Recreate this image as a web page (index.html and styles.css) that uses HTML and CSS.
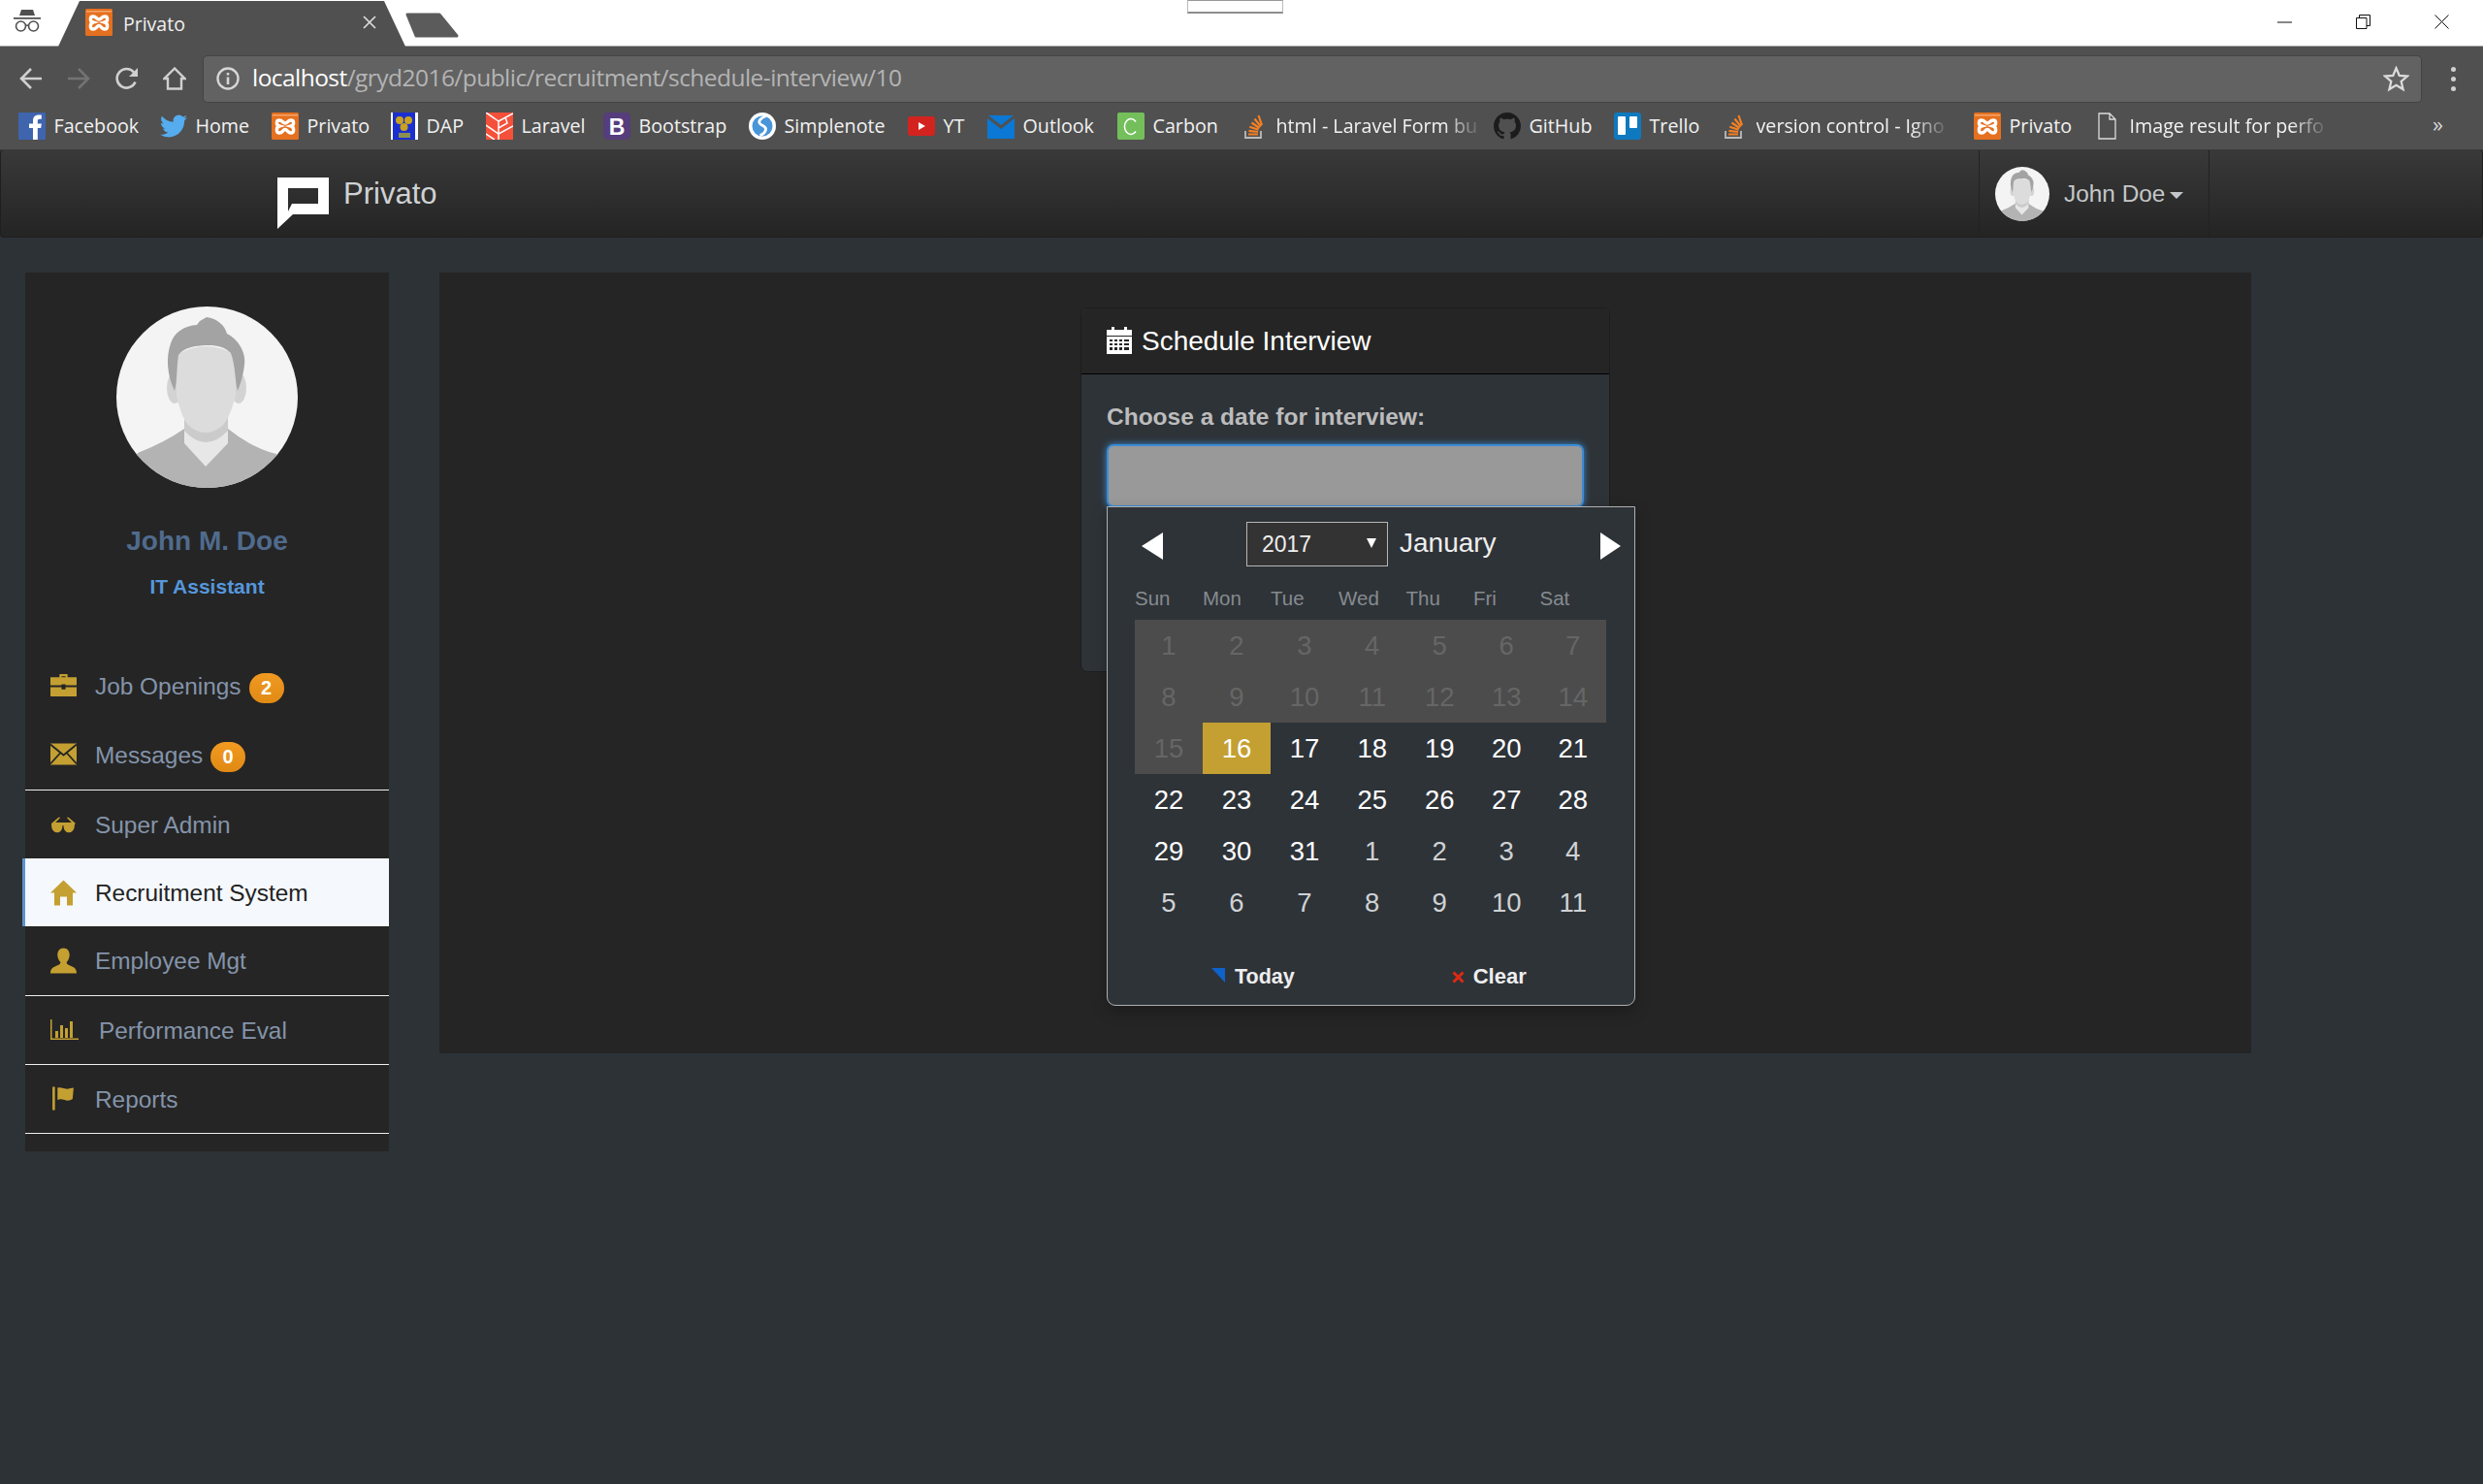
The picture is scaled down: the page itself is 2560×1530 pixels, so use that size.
FILE: index.html
```html
<!DOCTYPE html>
<html lang="en">
<head>
<meta charset="utf-8">
<title>Privato</title>
<link rel="stylesheet" href="styles.css">
</head>
<body>
<svg class="defs" width="0" height="0" aria-hidden="true">
  <defs>
    <symbol id="xampp" viewBox="0 0 28 28">
      <rect width="28" height="28" rx="1.5" fill="#e5701f"/>
      <rect x="1" y="2" width="26" height="1.5" fill="#f4a56b"/>
      <path d="M8 8C4.5 8 4.5 13 8 14 4.5 15 4.5 21 8 21 11.5 21 11.5 17.5 14 17.5 16.5 17.5 16.500 21 20 21 23.500 21 23.500 15 20 14 23.500 13 23.500 8 20 8 16.500 8 16.500 11 14 11 11.500 11 11.500 8 8 8Z" fill="#e5701f" stroke="#fff" stroke-width="3.4"/>
    </symbol>
    <symbol id="stack" viewBox="0 0 25 28">
      <path d="M2 19v7h16v-7" fill="none" stroke="#bcbbbb" stroke-width="1.800"/>
      <path d="M5 22.500h10M5.500 18.800l9.500 1.200M6.300 14.800l9.300 3M8.500 10.500l8 5.500M11.500 6.500l6.500 8M15.500 3l3.500 10" fill="none" stroke="#f48024" stroke-width="2.200"/>
    </symbol>
    <clipPath id="avatar-clip"><circle cx="93.500" cy="93.500" r="93.500"/></clipPath>
    <symbol id="avatar" viewBox="0 0 187 187">
      <g clip-path="url(#avatar-clip)">
        <rect width="187" height="187" fill="#f4f4f4"/>
        <path d="M22 151Q50 140 70 126L115 126Q140 146 165 152L190 190H0Z" fill="#b3b3b3"/>
        <path d="M70 105V141L92 165 115 141V105Z" fill="#e7e7e7"/>
        <path d="M70 105H115V128Q92 152 70 128Z" fill="#cbcbcb"/>
        <ellipse cx="60" cy="84" rx="8" ry="16" fill="#d3d3d3"/>
        <ellipse cx="126" cy="84" rx="8" ry="16" fill="#d3d3d3"/>
        <path d="M62 50Q92 32 123 50L123 92Q116 118 108 124 92 136 76 124 68 118 62 92Z" fill="#dcdcdc"/>
        <path d="M60 87C52 70 51 52 56 38 60 26 70 20 83 19L86 15 93 11C104 12 112 20 114 28 126 34 134 48 132 60 131 70 128 80 125 87 122 76 123 62 118 48 112 42 104 40 96 40 82 40 70 42 64 50 62 62 63 76 60 87Z" fill="#a3a3a3"/>
      </g>
    </symbol>
  </defs>
</svg>

<div class="thumb"></div>

<header class="browser">
  <div class="tabstrip">
    <svg class="incognito" viewBox="0 0 28 25"><path d="M8 2h12l2 6H6zM0 10h28v1.800H0z" fill="#505050"/><circle cx="7.500" cy="19" r="5" fill="none" stroke="#505050" stroke-width="1.600"/><circle cx="20.500" cy="19" r="5" fill="none" stroke="#505050" stroke-width="1.600"/><path d="M12.500 18.500q1.500-1 3 0" fill="none" stroke="#505050" stroke-width="1.400"/></svg>
    <div class="tab">
      <svg class="tab-ico"><use href="#xampp"/></svg>
      <span class="tab-title">Privato</span>
      <svg class="tab-close" viewBox="0 0 14 14"><path d="M1 1l12 12M13 1L1 13" stroke="#ddd" stroke-width="1.700"/></svg>
    </div>
    <svg class="newtab" viewBox="0 0 56 26"><path d="M2 2H35L53 24H11Z" fill="#5b5b5b" stroke="#5b5b5b" stroke-width="3" stroke-linejoin="round"/></svg>
    <div class="winctl">
      <svg class="w-min" viewBox="0 0 15 14"><path d="M0 7.500h15" stroke="#111" stroke-width="1"/></svg>
      <svg class="w-res" viewBox="0 0 15 15"><path d="M.5 3.500h10.500v11H.5zM3.500 3.500v-3h11v11H11" fill="none" stroke="#111" stroke-width="1"/></svg>
      <svg class="w-close" viewBox="0 0 15 15"><path d="M.500.500l14 14M14.500.500l-14 14" stroke="#111" stroke-width="1"/></svg>
    </div>
  </div>
  <div class="toolbar">
    <svg class="tb tb-back" viewBox="0 0 24 24"><path d="M23 12H2M12 2L2 12l10 10" fill="none" stroke="#d0d0d0" stroke-width="2.600"/></svg>
    <svg class="tb tb-fwd" viewBox="0 0 24 24"><path d="M1 12h21M12 2l10 10-10 10" fill="none" stroke="#737373" stroke-width="2.600"/></svg>
    <svg class="tb tb-reload" viewBox="0 0 24 24"><path d="M20.500 15.500A9.800 9.800 0 1 1 19 5.500" fill="none" stroke="#d0d0d0" stroke-width="2.600"/><path d="M23 1v9h-9z" fill="#d0d0d0"/></svg>
    <svg class="tb tb-home" viewBox="0 0 24 24"><path d="M12 1.500L1.500 12H5v10.500h14V12h3.500z" fill="none" stroke="#d0d0d0" stroke-width="2.400"/></svg>
    <div class="omnibox">
      <svg class="info" viewBox="0 0 24 24"><circle cx="12" cy="12" r="10.500" fill="none" stroke="#d6d6d6" stroke-width="2.400"/><path d="M10.700 10.500h2.600v7.500h-2.600zM10.700 6h2.600v2.600h-2.600z" fill="#d6d6d6"/></svg>
      <span class="url"><span class="host">localhost</span>/gryd2016/public/recruitment/schedule-interview/10</span>
      <svg class="star" viewBox="0 0 24 24"><path d="M12 2l2.900 6.800 7.300.6-5.600 4.800 1.700 7.200-6.300-3.800-6.300 3.800 1.700-7.200L1.800 9.400l7.300-.6z" fill="none" stroke="#dcdcdc" stroke-width="2"/></svg>
    </div>
    <div class="kebab"><i></i><i></i><i></i></div>
  </div>
  <nav class="bookmarks">
    <a class="bm"><svg class="bm-ico" viewBox="0 0 28 28"><rect width="28" height="28" rx="1" fill="#3f65ae"/><path d="M15 28V16h-4v-4.500h4V8.500c0-4 2.400-6 5.800-6h3v4.300h-2c-1.500 0-2 .8-2 2.100v2.600h4l-.6 4.500h-3.400v12z" fill="#fff"/></svg><span>Facebook</span></a>
    <a class="bm"><svg class="bm-ico" viewBox="0 0 24 24"><path d="M23.953 4.570a10 10 0 01-2.825.775 4.958 4.958 0 002.163-2.723c-.951.555-2.005.959-3.127 1.184a4.920 4.920 0 00-8.384 4.482C7.690 8.095 4.067 6.130 1.640 3.162a4.822 4.822 0 00-.666 2.475c0 1.710.870 3.213 2.188 4.096a4.904 4.904 0 01-2.228-.616v.060a4.923 4.923 0 003.946 4.827 4.996 4.996 0 01-2.212.085 4.936 4.936 0 004.604 3.417 9.867 9.867 0 01-6.102 2.105c-.390 0-.779-.023-1.170-.067a13.995 13.995 0 007.557 2.209c9.053 0 13.998-7.496 13.998-13.985 0-.210 0-.420-.015-.630A9.935 9.935 0 0024 4.590z" fill="#55acee"/></svg><span>Home</span></a>
    <a class="bm"><svg class="bm-ico"><use href="#xampp"/></svg><span>Privato</span></a>
    <a class="bm"><svg class="bm-ico" viewBox="0 0 28 28"><rect width="28" height="28" fill="#fff"/><rect x="2" width="23" height="28" fill="#1a2fd0"/><circle cx="9" cy="8" r="4" fill="#c9a21f"/><circle cx="18" cy="8" r="4" fill="#c9a21f"/><circle cx="13.500" cy="15" r="4" fill="#c9a21f"/><rect x="8" y="21" width="12" height="5" fill="#8a8f50"/></svg><span>DAP</span></a>
    <a class="bm"><svg class="bm-ico" viewBox="0 0 28 28"><rect width="28" height="28" fill="#f4503a"/><path d="M0 0l13 9M0 13l13 9 15-8M13 9l15-8M13 9v19M0 22l9 6M20 5l2 6-9 5" fill="none" stroke="#fff" stroke-width="1.500"/></svg><span>Laravel</span></a>
    <a class="bm"><svg class="bm-ico" viewBox="0 0 28 28"><rect width="28" height="28" rx="5" fill="#563d7c"/><text x="14" y="22.500" class="bm-letter">B</text></svg><span>Bootstrap</span></a>
    <a class="bm"><svg class="bm-ico" viewBox="0 0 28 28"><circle cx="14" cy="14" r="14" fill="#fff"/><circle cx="14" cy="14" r="10.500" fill="#4895d9"/><path d="M18 3.500c-6 2-8.500 5.500-6.500 8 2 2.500 6.500 2.500 6 6-.4 2.800-3 5-6 6" fill="none" stroke="#fff" stroke-width="2.800"/></svg><span>Simplenote</span></a>
    <a class="bm"><svg class="bm-ico" viewBox="0 0 28 28"><rect y="4" width="28" height="20" rx="3" fill="#d3231f"/><path d="M11 10l7 4-7 4z" fill="#fff"/></svg><span>YT</span></a>
    <a class="bm"><svg class="bm-ico" viewBox="0 0 28 28"><path d="M0 6l14 11L28 6v21H0z" fill="#0a78d4"/><path d="M1 3h26L14 13z" fill="#0a78d4"/></svg><span>Outlook</span></a>
    <a class="bm"><svg class="bm-ico" viewBox="0 0 28 28"><rect width="28" height="28" rx="2" fill="#74bf5b"/><path d="M19 9.500a6.500 8 0 1 0 0 10" fill="none" stroke="#fff" stroke-width="1.500"/></svg><span>Carbon</span></a>
    <a class="bm"><svg class="bm-ico narrow"><use href="#stack"/></svg><span class="fade">html - Laravel Form bu</span></a>
    <a class="bm"><svg class="bm-ico" viewBox="0 0 16 16"><path d="M8 0C3.580 0 0 3.580 0 8c0 3.540 2.290 6.530 5.470 7.590.400.070.550-.170.550-.380 0-.190-.010-.820-.010-1.490-2.010.370-2.530-.490-2.690-.940-.090-.230-.480-.940-.820-1.130-.280-.150-.680-.520-.010-.530.630-.010 1.080.580 1.230.820.720 1.210 1.870.870 2.330.660.070-.520.280-.870.510-1.070-1.780-.200-3.640-.890-3.640-3.950 0-.870.310-1.590.820-2.150-.080-.200-.360-1.020.080-2.120 0 0 .670-.210 2.200.820.640-.180 1.320-.270 2-.270.680 0 1.360.090 2 .27 1.530-1.040 2.200-.820 2.200-.820.440 1.100.160 1.920.080 2.120.510.560.820 1.270.820 2.150 0 3.070-1.870 3.750-3.650 3.950.290.250.540.730.540 1.480 0 1.070-.010 1.930-.010 2.200 0 .210.150.460.550.380A8.013 8.013 0 0016 8c0-4.420-3.580-8-8-8z" fill="#1c1c1c"/></svg><span>GitHub</span></a>
    <a class="bm"><svg class="bm-ico" viewBox="0 0 28 28"><rect width="28" height="28" rx="3" fill="#0f79bf"/><rect x="4" y="4" width="8" height="19" rx="1" fill="#fff"/><rect x="16" y="4" width="8" height="12" rx="1" fill="#fff"/></svg><span>Trello</span></a>
    <a class="bm"><svg class="bm-ico narrow"><use href="#stack"/></svg><span class="fade">version control - Igno</span></a>
    <a class="bm"><svg class="bm-ico" ><use href="#xampp"/></svg><span>Privato</span></a>
    <a class="bm"><svg class="bm-ico narrow" viewBox="0 0 25 28"><path d="M2 1h11l6 6v20H2zM13 1v6h6" fill="none" stroke="#dcdcdc" stroke-width="1.300"/></svg><span class="fade">Image result for perfo</span></a>
    <span class="more">»</span>
  </nav>
</header>

<div class="navbar">
  <a class="brand">
    <svg class="brand-logo" viewBox="0 0 53 53"><path fill-rule="evenodd" d="M0 0H53V38H16L0 53ZM11 11V35L15 27H42V11Z" fill="#fff"/></svg>
    <span>Privato</span>
  </a>
  <div class="user">
    <svg class="user-ava"><use href="#avatar"/></svg>
    <span class="user-name">John Doe</span>
    <span class="caret"></span>
  </div>
</div>

<div class="page">
  <aside class="sidebar">
    <div class="profile">
      <svg class="profile-ava"><use href="#avatar"/></svg>
      <div class="profile-name">John M. Doe</div>
      <div class="profile-role">IT Assistant</div>
    </div>
    <ul class="menu">
      <li class="item">
        <svg class="ico" viewBox="0 0 26 24"><path d="M9 4V1h8v3h-2V3h-4v1zM0 4h26v8H15v-1h-4v1H0zM0 14h11v2h4v-2h11v9H0z" fill="#c4a032"/></svg>
        <span>Job Openings</span><b class="badge">2</b>
      </li>
      <li class="item sep tall">
        <svg class="ico" viewBox="0 0 27 22"><path d="M0 0h27v22H0z" fill="#c4a032"/><path d="M0 1l13.500 11L27 1M0 21l10-11M27 21L17 10" fill="none" stroke="#252525" stroke-width="1.800"/></svg>
        <span>Messages</span><b class="badge">0</b>
      </li>
      <li class="item short">
        <svg class="ico" viewBox="0 0 26 17"><path d="M1 7L8 1h2L5 6h16l-5-5h2l7 6-1 1c0 5-2 8-6 8-3 0-5-3-5-7h-1c0 4-2 7-5 7-4 0-6-3-6-8z" fill="#c4a032"/></svg>
        <span>Super Admin</span>
      </li>
      <li class="item short active">
        <svg class="ico" viewBox="0 0 27 26"><path d="M13.500 0L27 13h-4v13h-6v-9h-7v9H4V13H0z" fill="#c4a032"/></svg>
        <span>Recruitment System</span>
      </li>
      <li class="item sep">
        <svg class="ico" viewBox="0 0 26 25"><path d="M13 0c4 0 6 3 6 7 0 3-2 6-3 7 0 2 2 3 5 4 3 1 5 3 5 7H0c0-4 2-6 5-7 3-1 5-2 5-4-1-1-3-4-3-7 0-4 2-7 6-7z" fill="#c4a032"/></svg>
        <span>Employee Mgt</span>
      </li>
      <li class="item sep wide">
        <svg class="ico" viewBox="0 0 29 21"><path d="M0 0h1.500v19.500H29V21H0z M5 12h3v7H5z M10 6h3v13h-3z M15 9h3v10h-3z M20 2h3v17h-3z" fill="#c4a032"/></svg>
        <span>Performance Eval</span>
      </li>
      <li class="item sep">
        <svg class="ico" viewBox="0 0 26 23"><path d="M2 0h2.500v23H2z M7 1c4-1 6 1 9 1 3 0 5-1 7-1l-1 11c-3 2-5 2-8 1-3-1-5-1-7 0z" fill="#c4a032"/></svg>
        <span>Reports</span>
      </li>
    </ul>
  </aside>

  <main class="panel">
    <section class="card">
      <div class="card-head">
        <svg class="cal" viewBox="0 0 26 28"><path d="M0 3h5V0h3v3h10V0h3v3h5v6H0z" fill="#fff"/><path fill-rule="evenodd" d="M0 10h26v18H0zM3 13v2h3v-2zM8 13v2h3v-2zM13 13v2h3v-2zM18 13v2h5v-2zM3 17v2h3v-2zM8 17v2h3v-2zM13 17v2h3v-2zM18 17v2h5v-2zM3 21v3h3v-3zM8 21v3h3v-3zM13 21v3h3v-3zM18 21v3h5v-3z" fill="#fff"/></svg>
        <h2>Schedule Interview</h2>
      </div>
      <div class="card-body">
        <label class="field-label">Choose a date for interview:</label>
        <div class="date-input"></div>
      </div>

      <div class="picker">
        <div class="picker-head">
          <span class="arrow arrow-l"></span>
          <div class="year">2017<i></i></div>
          <span class="month">January</span>
          <span class="arrow arrow-r"></span>
        </div>
        <div class="weekdays">
          <span>Sun</span><span>Mon</span><span>Tue</span><span>Wed</span><span>Thu</span><span>Fri</span><span>Sat</span>
        </div>
        <div class="days">
          <span class="off">1</span><span class="off">2</span><span class="off">3</span><span class="off">4</span><span class="off">5</span><span class="off">6</span><span class="off">7</span>
          <span class="off">8</span><span class="off">9</span><span class="off">10</span><span class="off">11</span><span class="off">12</span><span class="off">13</span><span class="off">14</span>
          <span class="off">15</span><span class="sel">16</span><span>17</span><span>18</span><span>19</span><span>20</span><span>21</span>
          <span>22</span><span>23</span><span>24</span><span>25</span><span>26</span><span>27</span><span>28</span>
          <span>29</span><span>30</span><span>31</span><span class="other">1</span><span class="other">2</span><span class="other">3</span><span class="other">4</span>
          <span class="other">5</span><span class="other">6</span><span class="other">7</span><span class="other">8</span><span class="other">9</span><span class="other">10</span><span class="other">11</span>
        </div>
        <div class="picker-foot">
          <a class="act act-today"><svg viewBox="0 0 14 15"><path d="M0 0h14v15z" fill="#0f62c9"/></svg>Today</a>
          <a class="act act-clear"><svg viewBox="0 0 13 13"><path d="M1.500 1.500l10 10M11.500 1.500l-10 10" stroke="#dc2a12" stroke-width="3"/></svg>Clear</a>
        </div>
      </div>
    </section>
  </main>
</div>
</body>
</html>
```
FILE: styles.css
```css
* { box-sizing: border-box; }
html, body { margin: 0; padding: 0; }
body {
  width: 2560px;
  height: 1530px;
  overflow: hidden;
  background: #2c3236;
  font-family: "Liberation Sans", Arial, sans-serif;
  color: #fff;
  position: relative;
}
.defs { position: absolute; }

.thumb {
  position: absolute;
  left: 1224px;
  top: 0;
  width: 99px;
  height: 14px;
  background: #fff;
  border-top: 1px solid #999;
  border-bottom: 2px solid #8d8d8d;
  border-left: 1px solid #bbb;
  border-right: 1px solid #bbb;
  z-index: 5;
}

/* browser chrome */
.browser { background: #505050; }
.tabstrip {
  height: 48px;
  background: #fff;
  display: flex;
  align-items: center;
  padding-left: 14px;
  border-bottom: 1px solid #a8a8a8;
}
.incognito { width: 28px; height: 25px; margin-right: 18px; margin-top: -7px; }
.tab {
  width: 358px;
  height: 48px;
  background: #505050;
  clip-path: polygon(0 100%, 22px 1px, 336px 1px, 358px 100%);
  display: flex;
  align-items: center;
  padding: 0 30px 0 28px;
  margin-bottom: -1px;
}
.tab-ico { width: 28px; height: 28px; flex: none; margin-top: -2px; }
.tab-title {
  font: 400 19.5px "Open Sans", sans-serif;
  color: #f1f1f1;
  margin-left: 11px;
  flex: 1;
}
.tab-close { width: 14px; height: 14px; margin-top: -2px; }
.newtab { width: 56px; height: 26px; margin-top: 5px; flex: none; }
.winctl { margin-left: auto; display: flex; align-items: center; height: 100%; padding-right: 35px; margin-top: -1px; }
.winctl svg { display: block; width: 15px; height: 15px; margin-top: -1px; }
.w-res { margin-left: 66px; }
.w-close { margin-left: 66px; }

.toolbar {
  height: 57px;
  display: flex;
  align-items: center;
  padding-left: 20px;
  padding-top: 9px;
}
.tb { width: 24px; height: 24px; flex: none; margin-top: -1px; }
.tb-fwd { margin-left: 25px; }
.tb-reload { margin-left: 26px; }
.tb-home { margin-left: 25px; }
.omnibox {
  width: 2286px;
  height: 47px;
  margin-left: 18px;
  background: #626262;
  border-radius: 4px;
  box-shadow: 0 0 0 1px #444;
  display: flex;
  align-items: center;
  padding: 0 12px 0 13px;
}
.info { width: 24px; height: 24px; flex: none; }
.url {
  margin-left: 13px;
  font: 400 24.5px "Open Sans", sans-serif;
  letter-spacing: -.55px;
  color: #b4b4b4;
  flex: 1;
  margin-top: -3px;
}
.host { color: #fff; }
.star { width: 27px; height: 27px; flex: none; }
.kebab { margin-left: 31px; display: flex; flex-direction: column; gap: 5px; }
.kebab i { display: block; width: 5px; height: 5px; border-radius: 50%; background: #d0d0d0; }

.bookmarks {
  height: 50px;
  display: grid;
  grid-template-columns: 146px 115px 123px 98px 121px 150px 164px 82px 134px 130px 258px 124px 113px 258px 127px 346px 1fr;
  align-items: center;
  padding-left: 19px;
  border-bottom: 1px solid #3a3a3a;
}
.bm {
  display: flex;
  align-items: center;
  gap: 8.5px;
  font: 400 19.7px "Open Sans", sans-serif;
  color: #f2f2f2;
  white-space: nowrap;
  min-width: 0;
}
.bm-ico { width: 28px; height: 28px; flex: none; margin-top: 1px; }
.bm-ico.narrow { width: 25px; }
.bm-letter { font: 700 23px "Liberation Sans", sans-serif; fill: #fff; text-anchor: middle; }
.fade {
  display: block;
  -webkit-mask-image: linear-gradient(to right, #000 calc(100% - 34px), rgba(0,0,0,.15) 100%);
  mask-image: linear-gradient(to right, #000 calc(100% - 34px), rgba(0,0,0,.15) 100%);
}
.more { font: 400 22px "Open Sans", sans-serif; color: #d8d8d8; margin-top: -5px; }

/* app navbar */
.navbar {
  height: 90px;
  background: linear-gradient(#393939, #242424);
  border: 1px solid #1f1f1f;
  border-top: 0;
  border-radius: 4px;
  display: flex;
  align-items: center;
  padding-left: 286px;
  position: relative;
}
.brand { display: flex; align-items: center; gap: 15px; color: #cfd2d4; font-size: 31px; }
.brand-logo { width: 53px; height: 53px; flex: none; margin-top: 19px; margin-left: -1px; }
.user {
  margin-left: auto;
  margin-right: 281px;
  width: 238px;
  height: 100%;
  border-left: 1px solid #222;
  border-right: 1px solid #222;
  display: flex;
  align-items: center;
  padding-left: 16px;
  color: #c4c7c9;
  font-size: 24.4px;
}
.user-ava { width: 56px; height: 56px; flex: none; margin-top: 1px; }
.user-name { margin-left: 15px; }
.caret {
  margin-left: 5px;
  margin-top: 3px;
  border-top: 7px solid #c4c7c9;
  border-left: 7px solid transparent;
  border-right: 7px solid transparent;
}

/* page */
.page { display: flex; gap: 52px; padding: 36px 0 0 26px; }
.sidebar { width: 375px; height: 906px; background: #252525; flex: none; }
.profile {
  height: 390px;
  padding-top: 35px;
  display: flex;
  flex-direction: column;
  align-items: center;
}
.profile-ava { width: 187px; height: 187px; flex: none; }
.profile-name { font-size: 28px; font-weight: 700; color: #506b8e; margin-top: 39px; line-height: 32px; }
.profile-role { font-size: 21px; font-weight: 700; color: #5597db; margin-top: 19px; line-height: 24px; }
.menu { list-style: none; margin: 0; padding: 0; }
.item {
  height: 71px;
  padding: 2px 0 0 26px;
  display: flex;
  align-items: center;
  font-size: 24.4px;
  color: #8494aa;
  position: relative;
}
.item.short { height: 70px; }
.item.sep { height: 72px; padding-top: 1px; border-bottom: 1px solid #eef0f0; }
.item.sep.tall { height: 73px; }
.item.sep.wide, .item.sep:last-child { height: 71px; }
.ico { width: 27px; height: 27px; flex: none; margin-right: 19px; margin-top: -2px; }
.item.wide .ico { width: 29px; margin-right: 21px; }
.item.active { background: #f5f8fc; color: #222; box-shadow: -3px 0 0 #5b93cc; }
.badge {
  width: 36px;
  height: 31px;
  border-radius: 16px;
  margin-left: 8px;
  margin-top: 3px;
  background: linear-gradient(#f09a22, #e08a14);
  color: #fff;
  font-size: 20px;
  display: flex;
  align-items: center;
  justify-content: center;
}

.panel { width: 1868px; height: 805px; background: #252525; flex: none; padding-top: 36px; display: flex; justify-content: center; align-items: flex-start; }
.card {
  width: 546px;
  height: 376px;
  background: #2e3338;
  border: 1px solid #1d1d1d;
  border-radius: 7px;
  position: relative;
}
.card-head {
  height: 68px;
  background: #252525;
  border-bottom: 1px solid #000;
  border-radius: 7px 7px 0 0;
  display: flex;
  align-items: center;
  padding-left: 26px;
}
.cal { width: 26px; height: 28px; flex: none; margin-top: -2px; }
.card-head h2 { margin: 0 0 0 10px; font-size: 28px; font-weight: 400; color: #fff; }
.card-body { padding: 29px 26px 0; }
.field-label { display: block; font-size: 24.5px; font-weight: 700; color: #bcbcbc; line-height: 30px; }
.date-input {
  width: 492px;
  height: 65px;
  margin-top: 13px;
  background: #999;
  border: 2px solid #3c8cd4;
  border-radius: 7px;
  box-shadow: 0 0 7px #3c8cd4;
}

.picker {
  position: absolute;
  left: 26px;
  top: 204px;
  width: 545px;
  height: 515px;
  background: #2e3338;
  border: 1px solid #aeb0b2;
  border-radius: 0 0 9px 9px;
  box-shadow: 0 6px 16px rgba(0,0,0,.25);
  padding: 15px 14px 0 28px;
  z-index: 2;
}
.picker-head { display: flex; align-items: center; height: 46px; }
.arrow { display: block; width: 0; height: 0; border-top: 14px solid transparent; border-bottom: 14px solid transparent; margin-top: 3px; }
.arrow-l { border-right: 22px solid #fff; margin-left: 7px; }
.arrow-r { border-left: 21px solid #fff; margin-left: auto; }
.year {
  width: 146px;
  height: 46px;
  margin-left: 86px;
  background: #333;
  border: 1px solid #b6b6b6;
  font-size: 23px;
  line-height: 44px;
  padding-left: 15px;
  color: #eee;
  position: relative;
}
.year i {
  position: absolute;
  left: 123px;
  top: 16px;
  border-top: 10px solid #fff;
  border-left: 5px solid transparent;
  border-right: 5px solid transparent;
}
.month { font-size: 28px; color: #eee; margin-left: 12px; margin-top: -2px; }
.weekdays {
  width: 486px;
  display: grid;
  grid-template-columns: 70px 70px 70px 69.5px 69.5px 68.5px 68.5px;
  font-size: 20.5px;
  color: #868b8f;
  line-height: 24px;
  margin-top: 21px;
}
.days {
  width: 486px;
  margin-top: 10px;
  display: grid;
  grid-template-columns: 70px 70px 70px 69.5px 69.5px 68.5px 68.5px;
  grid-auto-rows: 53px;
  font-size: 27.5px;
  color: #fff;
}
.days span { display: flex; align-items: center; justify-content: center; }
.days .off { background: #4c4c4c; color: #666; }
.days .sel { background: #c4a032; color: #fff; }
.days .other { color: #cfd2d4; }
.picker-foot { display: flex; align-items: center; padding-left: 79px; margin-top: 37px; gap: 162px; }
.act { display: flex; align-items: center; font-weight: 700; font-size: 21.5px; color: #eee; line-height: 26px; }
.act-today svg { width: 14px; height: 15px; margin-right: 10px; margin-top: -3px; }
.act-clear { font-size: 22px; }
.act-clear svg { width: 13px; height: 13px; margin-right: 9px; }
```
